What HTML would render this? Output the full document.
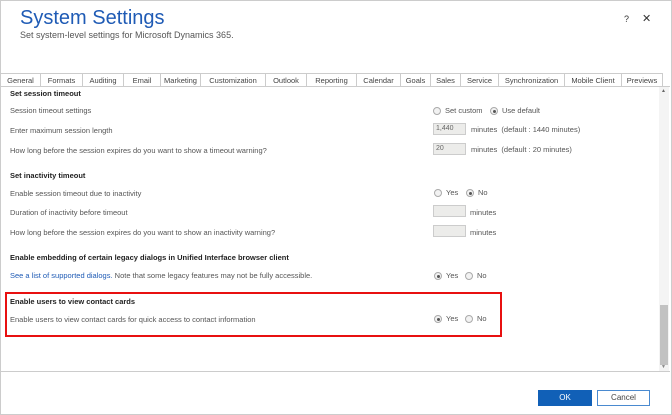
<!DOCTYPE html><html><head><style>
body{margin:0;width:672px;height:415px;overflow:hidden;background:#fff;font-family:"Liberation Sans",sans-serif;position:relative}
.a{position:absolute;white-space:nowrap}
.t{font-size:7.5px;color:#555}
.h{font-size:7.5px;font-weight:bold;color:#222}
.tab{position:absolute;top:73px;height:13px;border:1px solid #ccc;border-bottom:none;font-size:7.5px;color:#444;text-align:center;line-height:13px;box-sizing:border-box;background:#fff}
.r{position:absolute;width:8px;height:8px;border:1px solid #aaa;border-radius:50%;background:#f2f2f2;box-sizing:border-box}
.r.on::after{content:"";position:absolute;left:1.5px;top:1.5px;width:3px;height:3px;border-radius:50%;background:#555}
.in{position:absolute;width:33px;height:12px;border:1px solid #ccc;background:#ececea;box-sizing:border-box;font-size:7px;color:#666;line-height:10px;padding-left:2px}
</style></head><body>
<div class="a" style="left:0;top:0;width:670px;height:413px;border:1px solid #ccc"></div>
<div class="a" style="left:20px;top:7px;font-size:20px;color:#1f5bb5">System Settings</div>
<div class="a" style="left:20px;top:30px;font-size:9px;color:#555">Set system-level settings for Microsoft Dynamics 365.</div>
<div class="a" style="left:624px;top:14px;font-size:9px;color:#333">?</div>
<div class="a" style="left:642px;top:12px;font-size:11px;color:#333">✕</div>
<div class="tab" style="left:0;width:41px">General</div>
<div class="tab" style="left:40px;width:43px">Formats</div>
<div class="tab" style="left:82px;width:42px">Auditing</div>
<div class="tab" style="left:123px;width:38px">Email</div>
<div class="tab" style="left:160px;width:41px">Marketing</div>
<div class="tab" style="left:200px;width:66px">Customization</div>
<div class="tab" style="left:265px;width:42px">Outlook</div>
<div class="tab" style="left:306px;width:51px">Reporting</div>
<div class="tab" style="left:356px;width:45px">Calendar</div>
<div class="tab" style="left:400px;width:31px">Goals</div>
<div class="tab" style="left:430px;width:31px">Sales</div>
<div class="tab" style="left:460px;width:39px">Service</div>
<div class="tab" style="left:498px;width:67px">Synchronization</div>
<div class="tab" style="left:564px;width:58px">Mobile Client</div>
<div class="tab" style="left:621px;width:42px">Previews</div>
<div class="a" style="left:0;top:86px;width:670px;height:1px;background:#ccc"></div>
<div class="a" style="left:659px;top:87px;width:10px;height:285px;background:#f4f4f4"></div>
<div class="a" style="left:660px;top:305px;width:8px;height:60px;background:#c2c2c2"></div>
<div class="a" style="left:661px;top:88px;font-size:5px;color:#666">▲</div>
<div class="a" style="left:661px;top:364px;font-size:5px;color:#888">▼</div>
<div class="a" style="left:0;top:371px;width:670px;height:1px;background:#ccc"></div>

<div class="a h" style="left:10px;top:89px">Set session timeout</div>
<div class="a t" style="left:10px;top:106px">Session timeout settings</div>
<div class="r" style="left:433px;top:107px"></div><div class="a t" style="left:445px;top:106px">Set custom</div>
<div class="r on" style="left:490px;top:107px"></div><div class="a t" style="left:502px;top:106px">Use default</div>
<div class="a t" style="left:10px;top:126px">Enter maximum session length</div>
<div class="in" style="left:433px;top:123px">1,440</div><div class="a t" style="left:471px;top:125px">minutes &nbsp;(default : 1440 minutes)</div>
<div class="a t" style="left:10px;top:146px">How long before the session expires do you want to show a timeout warning?</div>
<div class="in" style="left:433px;top:143px">20</div><div class="a t" style="left:471px;top:145px">minutes &nbsp;(default : 20 minutes)</div>

<div class="a h" style="left:10px;top:171px">Set inactivity timeout</div>
<div class="a t" style="left:10px;top:189px">Enable session timeout due to inactivity</div>
<div class="r" style="left:434px;top:189px"></div><div class="a t" style="left:446px;top:188px">Yes</div>
<div class="r on" style="left:466px;top:189px"></div><div class="a t" style="left:478px;top:188px">No</div>
<div class="a t" style="left:10px;top:208px">Duration of inactivity before timeout</div>
<div class="in" style="left:433px;top:205px"></div><div class="a t" style="left:470px;top:208px">minutes</div>
<div class="a t" style="left:10px;top:228px">How long before the session expires do you want to show an inactivity warning?</div>
<div class="in" style="left:433px;top:225px"></div><div class="a t" style="left:470px;top:228px">minutes</div>

<div class="a h" style="left:10px;top:253px">Enable embedding of certain legacy dialogs in Unified Interface browser client</div>
<div class="a t" style="left:10px;top:271px"><span style="color:#1f5bb5">See a list of supported dialogs.</span> Note that some legacy features may not be fully accessible.</div>
<div class="r on" style="left:434px;top:272px"></div><div class="a t" style="left:446px;top:271px">Yes</div>
<div class="r" style="left:465px;top:272px"></div><div class="a t" style="left:477px;top:271px">No</div>

<div class="a" style="left:5px;top:292px;width:493px;height:41px;border:2px solid #e81010"></div>
<div class="a h" style="left:10px;top:297px">Enable users to view contact cards</div>
<div class="a t" style="left:10px;top:315px">Enable users to view contact cards for quick access to contact information</div>
<div class="r on" style="left:434px;top:315px"></div><div class="a t" style="left:446px;top:314px">Yes</div>
<div class="r" style="left:465px;top:315px"></div><div class="a t" style="left:477px;top:314px">No</div>

<div class="a" style="left:538px;top:390px;width:54px;height:16px;background:#1160b7;color:#fff;font-size:8px;text-align:center;line-height:16px">OK</div>
<div class="a" style="left:597px;top:390px;width:53px;height:16px;border:1px solid #4a8ad0;box-sizing:border-box;background:#fff;color:#444;font-size:8px;text-align:center;line-height:14px">Cancel</div>
</body></html>
